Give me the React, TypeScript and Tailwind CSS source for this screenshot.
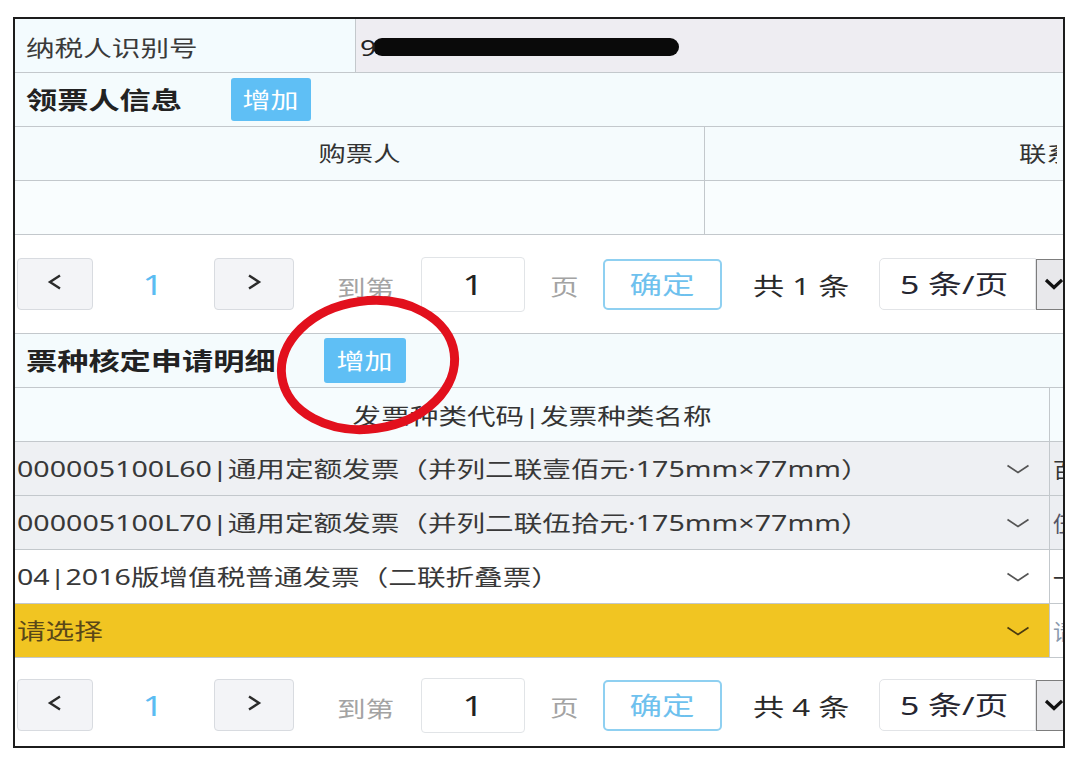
import React from "react";

type TP = { children?: React.ReactNode; c?: boolean; className?: string };
function T({ children, c = false, className = "" }: TP) {
  const base = c
    ? "inline-block whitespace-nowrap leading-none origin-center scale-x-[1.3]"
    : "inline-block whitespace-nowrap leading-none origin-left scale-x-[1.3]";
  return <span className={base + " " + className}>{children}</span>;
}

function RowChev({ color = "#555" }: { color?: string }) {
  return (
    <svg width="24" height="10" viewBox="0 0 24 10" className="shrink-0">
      <path d="M1.5 1.5 L12 8.5 L22.5 1.5" fill="none" stroke={color} strokeWidth="1.7" />
    </svg>
  );
}

function AddBtn({ big = false }: { big?: boolean }) {
  return (
    <div
      className={
        big
          ? "shrink-0 w-[82px] h-[45px] rounded-[3px] bg-[#5fbff5] flex items-center justify-center text-white text-[21.5px]"
          : "shrink-0 w-[80px] h-[43px] rounded-[3px] bg-[#5fbff5] flex items-center justify-center text-white text-[21.5px]"
      }
    >
      <T c>增加</T>
    </div>
  );
}

function Arrow({ left }: { left: boolean }) {
  return (
    <svg width="18" height="18" viewBox="0 0 18 18">
      <path
        d={left ? "M14 2.5 L4 9 L14 15.5" : "M4 2.5 L14 9 L4 15.5"}
        fill="none"
        stroke="#2b2b2b"
        strokeWidth="2.4"
        strokeLinejoin="miter"
      />
    </svg>
  );
}

function Pager({ total, second = false }: { total: number; second?: boolean }) {
  return (
    <div
      className={
        second
          ? "flex-1 flex items-center pt-[6px] pl-[2px] bg-white"
          : "h-[99px] shrink-0 flex items-center pl-[2px] bg-white border-b border-[#c3c8cc]"
      }
    >
      <div className="shrink-0 w-[76px] h-[52px] rounded-[4px] border border-[#d8dbe0] bg-[#f3f4f7] flex items-center justify-center pb-[4px]">
        <Arrow left />
      </div>
      <div className="shrink-0 w-[121px] flex justify-center text-[28px] text-[#5bbcf2]">
        <T c>1</T>
      </div>
      <div className="shrink-0 w-[80px] h-[52px] rounded-[4px] border border-[#d8dbe0] bg-[#f3f4f7] flex items-center justify-center pb-[4px]">
        <Arrow left={false} />
      </div>
      <div className="shrink-0 w-[127px] h-[52px] flex items-center pl-[43px] pt-[6px] text-[22px] text-[#a3a3a3]">
        <T>到第</T>
      </div>
      <div className="shrink-0 w-[104px] h-[55px] rounded-[4px] border border-[#e1e4e7] bg-white flex items-center justify-center text-[28px] text-[#222]">
        <T c>1</T>
      </div>
      <div className="shrink-0 w-[78px] h-[52px] flex items-center pl-[25px] pt-[4px] text-[22px] text-[#a3a3a3]">
        <T>页</T>
      </div>
      <div className="shrink-0 w-[119px] h-[51px] rounded-[5px] border-2 border-[#8fd0f1] bg-white flex items-center justify-center text-[25px] text-[#6ec1ee]">
        <T c>确定</T>
      </div>
      <div className="shrink-0 w-[157px] h-[52px] flex items-center pl-[31px] pt-[3px] text-[24px] text-[#2a2a2a]">
        <T>{"共 " + total + " 条"}</T>
      </div>
      <div className="shrink-0 w-[157px] h-[52px] rounded-l-[5px] border border-[#e2e4e7] bg-white flex items-center pl-[20px] text-[26px] text-[#252530]">
        <T>5 条/页</T>
      </div>
      <div className="shrink-0 w-[30px] h-[51px] border border-[#7d7d7d] bg-[#e8e8eb] flex items-center pl-[7px]">
        <svg width="20" height="12" viewBox="0 0 20 12">
          <path d="M2 2 L10 9.5 L18 2" fill="none" stroke="#111" strokeWidth="3.2" />
        </svg>
      </div>
    </div>
  );
}

type RowP = {
  text: string;
  rowBg: string;
  textColor: string;
  chev: string;
  col2: string;
  col2Bg: string;
  col2Color: string;
};

function DataRow({ text, rowBg, textColor, chev, col2, col2Bg, col2Color }: RowP) {
  return (
    <div className="flex h-[54px] shrink-0 border-b border-[#c3c8cc]">
      <div className={"shrink-0 w-[1035px] flex items-center justify-between pl-[2px] pr-[19px] border-r border-[#c3c8cc] " + rowBg}>
        <div className={"text-[22px] " + textColor}>
          <T>{text}</T>
        </div>
        <RowChev color={chev} />
      </div>
      <div className={"flex-1 flex items-center pl-[3px] overflow-hidden text-[22px] " + col2Bg + " " + col2Color}>
        <span className="inline-block w-[10px] overflow-hidden whitespace-nowrap leading-none">{col2}</span>
      </div>
    </div>
  );
}

export default function App() {
  return (
    <div className="relative w-[1080px] h-[761px] overflow-hidden bg-white font-['Noto_Sans','Noto_Sans_CJK_SC',sans-serif] text-[#333]">
      <div className="pt-[17px] pl-[13px]">
        <div className="w-[1052px] h-[731px] border-2 border-[#1c1c1c] overflow-hidden flex flex-col">
          {/* 纳税人识别号 */}
          <div className="flex h-[54px] shrink-0 border-b border-[#c3c8cc]">
            <div className="shrink-0 w-[341px] flex items-center pl-[11px] pt-[3px] bg-[#f3fbfe] border-r border-[#c3c8cc] text-[22px] text-[#3a3a3a]">
              <T>纳税人识别号</T>
            </div>
            <div className="flex-1 flex items-center pl-[4px] pt-[3px] bg-[#eeedf2] text-[22px] text-[#222]">
              <T>9</T>
              <span className="inline-block w-[306px] h-[18px] rounded-full bg-[#0a0a0a]"></span>
            </div>
          </div>

          {/* 领票人信息 */}
          <div className="flex items-center h-[54px] shrink-0 border-b border-[#c3c8cc] bg-[#f4fbfd]">
            <div className="shrink-0 w-[216px] pl-[11px] text-[24px] font-bold text-[#222]">
              <T>领票人信息</T>
            </div>
            <AddBtn />
          </div>

          {/* header */}
          <div className="flex h-[54px] shrink-0 border-b border-[#c3c8cc] bg-[#f5fbfd]">
            <div className="shrink-0 w-[690px] flex items-center justify-center border-r border-[#c3c8cc] text-[21px] text-[#333]">
              <T c>购票人</T>
            </div>
            <div className="flex-1 flex items-center pl-[314px] overflow-hidden text-[21px] text-[#333]">
              <span className="inline-block w-[38px] overflow-hidden">
                <T>联系</T>
              </span>
            </div>
          </div>

          {/* empty row */}
          <div className="flex h-[54px] shrink-0 border-b border-[#c3c8cc] bg-[#f9fdfe]">
            <div className="shrink-0 w-[690px] border-r border-[#c3c8cc]"></div>
            <div className="flex-1"></div>
          </div>

          <Pager total={1} />

          {/* 票种核定申请明细 */}
          <div className="flex items-center h-[54px] shrink-0 border-b border-[#c3c8cc] bg-[#f4fbfd]">
            <div className="shrink-0 w-[309px] pl-[11px] text-[24px] font-bold text-[#222]">
              <T>票种核定申请明细</T>
            </div>
            <AddBtn big />
          </div>

          {/* header 2 */}
          <div className="flex h-[54px] shrink-0 border-b border-[#c3c8cc] bg-[#f6fcfe]">
            <div className="shrink-0 w-[1035px] flex items-center justify-center border-r border-[#c3c8cc] text-[22px] text-[#333]">
              <T c>发票种类代码|发票种类名称</T>
            </div>
            <div className="flex-1"></div>
          </div>

          <DataRow
            text="000005100L60|通用定额发票（并列二联壹佰元·175mm×77mm）"
            rowBg="bg-[#eef0f3]"
            textColor="text-[#383838]"
            chev="#555"
            col2="百元"
            col2Bg="bg-[#eceef2]"
            col2Color="text-[#333]"
          />
          <DataRow
            text="000005100L70|通用定额发票（并列二联伍拾元·175mm×77mm）"
            rowBg="bg-[#eef0f3]"
            textColor="text-[#383838]"
            chev="#555"
            col2="伍拾元"
            col2Bg="bg-[#eceef2]"
            col2Color="text-[#556]"
          />
          <DataRow
            text="04|2016版增值税普通发票（二联折叠票）"
            rowBg="bg-white"
            textColor="text-[#383838]"
            chev="#555"
            col2="一"
            col2Bg="bg-white"
            col2Color="text-[#333]"
          />
          <DataRow
            text="请选择"
            rowBg="bg-[#f1c522]"
            textColor="text-[#5a4818]"
            chev="#4a3a10"
            col2="请选择"
            col2Bg="bg-white"
            col2Color="text-[#8a9aae]"
          />

          <Pager total={4} second />
        </div>
      </div>

      {/* red annotation circle */}
      <svg className="absolute left-0 top-0 pointer-events-none" width="1080" height="761" viewBox="0 0 1080 761">
        <ellipse cx="368" cy="365" rx="87" ry="64" fill="none" stroke="#e2101d" strokeWidth="9" transform="rotate(-8 368 365)" />
      </svg>
    </div>
  );
}
